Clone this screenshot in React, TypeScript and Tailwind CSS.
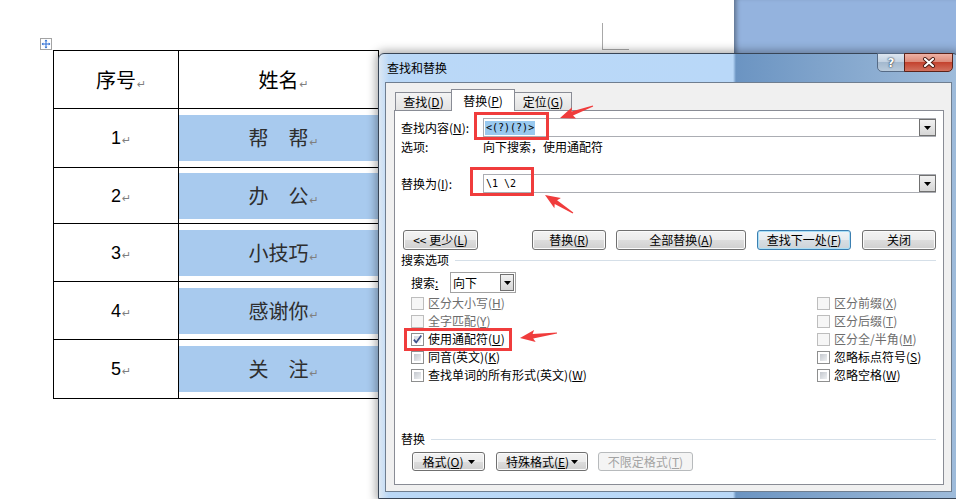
import React from "react";

type CB = "dis" | "off" | "on";

function Mark() {
  return (
    <span className="inline-block w-0 overflow-visible whitespace-nowrap">
      <span className="ml-[1px] font-['DejaVu_Sans',sans-serif] text-[11px] text-[#7f7f7f]">↵</span>
    </span>
  );
}

function U({ c }: { c: string }) {
  return <u className="underline underline-offset-[1px]">{c}</u>;
}

function Tri() {
  return (
    <svg width="7" height="4" viewBox="0 0 7 4">
      <path d="M0 0H7L3.5 4Z" fill="#000" />
    </svg>
  );
}

function Check({ s }: { s: CB }) {
  if (s === "dis")
    return <div className="w-[13px] h-[13px] shrink-0 border border-[#bdbdbd] bg-[#f6f6f6]" />;
  return (
    <div className="relative w-[13px] h-[13px] shrink-0 border border-[#8e8f8f] bg-white p-[2px]">
      <div className={s === "on" ? "w-full h-full bg-[linear-gradient(135deg,#d6dbe2,#f4f5f7)]" : "w-full h-full bg-[linear-gradient(135deg,#c4c8ce,#eef0f2)]"} />
      {s === "on" && (
        <svg className="absolute left-0 top-0" width="11" height="11" viewBox="0 0 11 11">
          <path d="M1.8 5.6 L4.2 8.4 L9.3 1.6" fill="none" stroke="#3c4f8a" strokeWidth="1.7" />
        </svg>
      )}
    </div>
  );
}

function Btn({ cls, children, kind = "n" }: { cls: string; children: React.ReactNode; kind?: "n" | "d" | "x" }) {
  const k =
    kind === "d"
      ? "border-[#3c7fb1] shadow-[inset_0_0_0_1px_#a9dff7] bg-[linear-gradient(#f0f4f7_0%,#e6ebef_50%,#d8dee3_51%,#ccd3d9_100%)] text-black"
      : kind === "x"
      ? "border-[#b7babc] bg-[#f4f4f4] text-[#a3a3a3]"
      : "border-[#707070] shadow-[inset_0_0_0_1px_#fbfbfb] bg-[linear-gradient(#f3f3f3_0%,#ebebeb_50%,#dddddd_51%,#cfcfcf_100%)] text-black";
  return (
    <div className={`${cls} h-full shrink-0 flex items-center justify-center rounded-[3px] border ${k}`}>{children}</div>
  );
}

function CRow({ s, children }: { s: CB; children: React.ReactNode }) {
  return (
    <div className="h-[18px] flex items-center">
      <Check s={s} />
      <span className={s === "dis" ? "ml-[4px] text-[#6d6d6d]" : "ml-[4px] text-black"}>{children}</span>
    </div>
  );
}

const rows = [
  { n: "1", name: "帮　帮", h: "h-[59px]" },
  { n: "2", name: "办　公", h: "h-[56px]" },
  { n: "3", name: "小技巧", h: "h-[58px]" },
  { n: "4", name: "感谢你", h: "h-[58px]" },
  { n: "5", name: "关　注", h: "h-[59px]" },
];

function arrow(tx: number, ty: number, px: number, py: number) {
  const dx = px - tx;
  const dy = py - ty;
  const L = Math.hypot(dx, dy);
  const ux = dx / L;
  const uy = dy / L;
  const nx = -uy;
  const ny = ux;
  const hl = 13;
  const hh = 6;
  const sh = 2.2;
  const th = 0.6;
  const bx = px - ux * hl;
  const by = py - uy * hl;
  const pts = [
    [tx + nx * th, ty + ny * th],
    [bx + nx * sh, by + ny * sh],
    [bx - ux * 2 + nx * hh, by - uy * 2 + ny * hh],
    [px, py],
    [bx - ux * 2 - nx * hh, by - uy * 2 - ny * hh],
    [bx - nx * sh, by - ny * sh],
    [tx - nx * th, ty - ny * th],
  ];
  return pts.map((p) => p.map((v) => v.toFixed(1)).join(",")).join(" ");
}

function Table() {
  return (
    <div className="relative w-[326px] border-l border-t border-r border-black">
      <div className="absolute -left-[14px] -top-[13px]">
        <svg width="12" height="12" viewBox="0 0 12 12">
          <rect x="0.5" y="0.5" width="11" height="11" fill="#fff" stroke="#a3a3a3" />
          <path d="M6 2.2V9.8M2.2 6H9.8" stroke="#2e6fd4" strokeWidth="1" />
          <path d="M6 1.6L4.5 3.3H7.5ZM6 10.4L4.5 8.7H7.5ZM1.6 6L3.3 4.5V7.5ZM10.4 6L8.7 4.5V7.5Z" fill="#2e6fd4" />
        </svg>
      </div>
      <div className="flex h-[58px] border-b border-black">
        <div className="w-[125px] border-r border-black flex items-center justify-center text-[20px] leading-none text-black">
          序号
          <Mark />
        </div>
        <div className="flex-1 flex items-center justify-center text-[20px] leading-none text-black">
          姓名
          <Mark />
        </div>
      </div>
      {rows.map((r) => (
        <div key={r.n} className={`${r.h} flex border-b border-black`}>
          <div className="w-[125px] border-r border-black flex items-center justify-center font-['Liberation_Sans',sans-serif] text-[18px] leading-none text-black">
            {r.n}
            <Mark />
          </div>
          <div className="flex-1 flex items-center">
            <div className="w-full h-[46px] bg-[#a8caee] flex items-center justify-center text-[20px] leading-none text-[#2e2e2e]">
              {r.name}
              <Mark />
            </div>
          </div>
        </div>
      ))}
    </div>
  );
}

function Dialog() {
  return (
    <div className="absolute left-[378px] top-[53px] w-[581px] h-[446px] rounded-t-[6px] border border-[#384556] flex flex-col shadow-[0_0_10px_2px_rgba(0,0,0,0.35)] bg-[linear-gradient(90deg,#dde8f3_0px,#bad8f7_10px,#b9d8f8_354px,#6b94c2_357px,#7fa3cb_440px,#9fbcdb_581px)] text-[12px] leading-none">
      <div className="h-[28px] shrink-0 flex items-start">
        <div className="self-center ml-[8px] text-black">查找和替换</div>
        <div className="ml-auto mr-[5px] -mt-px flex">
          <div className="w-[28px] h-[19px] rounded-bl-[5px] border border-[#566b86] bg-[linear-gradient(#dde6f0,#c3d2e2_45%,#a4b9cf_50%,#b9cadb)] flex items-center justify-center font-['DejaVu_Sans',sans-serif] text-[12px] font-bold text-white [text-shadow:0_0_2px_#1e2e42,0_0_1px_#1e2e42]">
            ?
          </div>
          <div className="-ml-px w-[49px] h-[19px] rounded-br-[5px] border border-[#5b2219] bg-[linear-gradient(#eeb1a4,#dd8c7b_45%,#c4432f_50%,#d2715e)] flex items-center justify-center">
            <svg width="14" height="11" viewBox="0 0 14 11">
              <path d="M3 2 L11 9 M11 2 L3 9" stroke="#4a1a12" strokeWidth="4" strokeLinecap="round" />
              <path d="M3 2 L11 9 M11 2 L3 9" stroke="#fff" strokeWidth="2.2" strokeLinecap="round" />
            </svg>
          </div>
        </div>
      </div>
      <div className="ml-[6px] w-[567px] h-[410px] shrink-0 border border-[#6f7e90] bg-[#f0f0f0] flex flex-col pt-[6px] pl-[8px] pr-[7px] pb-[6px]">
        <div className="h-[21px] shrink-0 flex items-end pl-[1px]">
          <div className="w-[57px] h-[18px] border border-b-0 border-[#898c95] bg-[linear-gradient(#f4f4f4,#e2e2e2)] flex items-center justify-center text-black">
            查找(<U c="D" />)
          </div>
          <div className="relative z-10 -ml-px -mb-px w-[64px] h-[22px] border border-b-0 border-[#898c95] bg-white flex items-center justify-center text-black">
            替换(<U c="P" />)
          </div>
          <div className="-ml-px w-[58px] h-[18px] border border-b-0 border-[#898c95] bg-[linear-gradient(#f4f4f4,#e2e2e2)] flex items-center justify-center text-black">
            定位(<U c="G" />)
          </div>
        </div>
        <div className="flex-1 bg-white border border-[#898c95] pl-[6px] pr-[7px] flex flex-col text-black">
          <div className="mt-[7px] h-[19px] shrink-0 flex items-center">
            <div className="w-[82px]">
              查找内容(<U c="N" />):
            </div>
            <div className="flex-1 h-full border border-[#abadb3] bg-white flex items-center">
              <span className="ml-[1px] h-[14px] px-[1px] bg-[#99c9ef] flex items-center font-['DejaVu_Sans_Mono',monospace] text-[10px] text-black">
                {"<(?)(?)>"}
              </span>
              <div className="ml-auto -mr-px w-[17px] h-[17px] border border-[#707070] bg-[linear-gradient(#f2f2f2,#d6d6d6)] flex items-center justify-center">
                <Tri />
              </div>
            </div>
          </div>
          <div className="mt-[3px] h-[14px] shrink-0 flex items-center">
            <div className="w-[82px]">选项:</div>
            <div>向下搜索，使用通配符</div>
          </div>
          <div className="mt-[20px] h-[19px] shrink-0 flex items-center">
            <div className="w-[82px]">
              替换为(<U c="I" />):
            </div>
            <div className="flex-1 h-full border border-[#abadb3] bg-white flex items-center">
              <span className="ml-[2px] font-['DejaVu_Sans_Mono',monospace] text-[10px] text-black">{"\\1 \\2"}</span>
              <div className="ml-auto -mr-px w-[17px] h-[17px] border border-[#707070] bg-[linear-gradient(#f2f2f2,#d6d6d6)] flex items-center justify-center">
                <Tri />
              </div>
            </div>
          </div>
          <div className="mt-[37px] h-[20px] shrink-0 flex">
            <Btn cls="ml-[2px] w-[75px]">
              {"<<"} 更少(<U c="L" />)
            </Btn>
            <Btn cls="ml-[54px] w-[74px]">
              替换(<U c="R" />)
            </Btn>
            <Btn cls="ml-[10px] w-[130px]">
              全部替换(<U c="A" />)
            </Btn>
            <Btn cls="ml-[11px] w-[94px]" kind="d">
              查找下一处(<U c="F" />)
            </Btn>
            <Btn cls="ml-[11px] w-[74px]">关闭</Btn>
          </div>
          <div className="mt-[2px] h-[16px] shrink-0 flex items-center">
            <span>搜索选项</span>
            <div className="ml-[6px] flex-1 h-px bg-[#d5dfe8]" />
          </div>
          <div className="mt-[4px] h-[21px] shrink-0 flex items-center pl-[10px]">
            <div className="w-[39px]">
              搜索<U c=":" />
            </div>
            <div className="w-[66px] h-full border border-[#a2a2a2] bg-white flex items-center">
              <span className="ml-[2px]">向下</span>
              <div className="ml-auto mr-[1px] w-[14px] h-[17px] border border-[#707070] bg-[linear-gradient(#f2f2f2,#d6d6d6)] flex items-center justify-center">
                <Tri />
              </div>
            </div>
          </div>
          <div className="mt-[1px] shrink-0 flex">
            <div className="w-[416px] pl-[10px] flex flex-col">
              <CRow s="dis">
                区分大小写(<U c="H" />)
              </CRow>
              <CRow s="dis">
                全字匹配(<U c="Y" />)
              </CRow>
              <CRow s="on">
                使用通配符(<U c="U" />)
              </CRow>
              <CRow s="off">
                同音(英文)(<U c="K" />)
              </CRow>
              <CRow s="off">
                查找单词的所有形式(英文)(<U c="W" />)
              </CRow>
            </div>
            <div className="flex flex-col">
              <CRow s="dis">
                区分前缀(<U c="X" />)
              </CRow>
              <CRow s="dis">
                区分后缀(<U c="T" />)
              </CRow>
              <CRow s="dis">
                区分全/半角(<U c="M" />)
              </CRow>
              <CRow s="off">
                忽略标点符号(<U c="S" />)
              </CRow>
              <CRow s="off">
                忽略空格(<U c="W" />)
              </CRow>
            </div>
          </div>
          <div className="mt-[47px] h-[16px] shrink-0 flex items-center">
            <span>替换</span>
            <div className="ml-[6px] flex-1 h-px bg-[#d5dfe8]" />
          </div>
          <div className="mt-[5px] h-[19px] shrink-0 flex pl-[11px]">
            <Btn cls="w-[73px]">
              格式(<U c="O" />)
              <span className="ml-[4px] flex">
                <Tri />
              </span>
            </Btn>
            <Btn cls="ml-[11px] w-[92px]">
              特殊格式(<U c="E" />)
              <span className="ml-[2px] flex">
                <Tri />
              </span>
            </Btn>
            <Btn cls="ml-[10px] w-[95px]" kind="x">
              不限定格式(<U c="T" />)
            </Btn>
          </div>
        </div>
      </div>
    </div>
  );
}

export default function App() {
  return (
    <div className="relative w-[956px] h-[499px] overflow-hidden bg-white font-['Noto_Sans_CJK_SC','Noto_Sans',sans-serif]">
      <div className="flex h-full">
        <div className="relative w-[734px] h-full bg-white pl-[53px] pt-[50px]">
          <div className="absolute left-[602px] top-[23px] w-[27px] h-[27px] border-l border-b border-[#a8a8a8]" />
          <Table />
        </div>
        <div className="flex-1 h-full bg-[#94b3de] shadow-[inset_5px_0_5px_-3px_rgba(0,0,0,0.4)]" />
      </div>
      <Dialog />
      <div className="absolute left-[474px] top-[112px] w-[75px] h-[28px] border-[3px] border-[#f03c3c]" />
      <div className="absolute left-[470px] top-[167px] w-[64px] h-[29px] border-[3px] border-[#f03c3c]" />
      <div className="absolute left-[404px] top-[328px] w-[108px] h-[23px] border-[3px] border-[#f03c3c]" />
      <svg className="absolute left-0 top-0 pointer-events-none" width="956" height="499">
        <polygon points={arrow(593, 106, 560, 118)} fill="#f03c3c" />
        <polygon points={arrow(573, 213, 545, 195)} fill="#f03c3c" />
        <polygon points={arrow(557, 333, 520, 338)} fill="#f03c3c" />
      </svg>
    </div>
  );
}
